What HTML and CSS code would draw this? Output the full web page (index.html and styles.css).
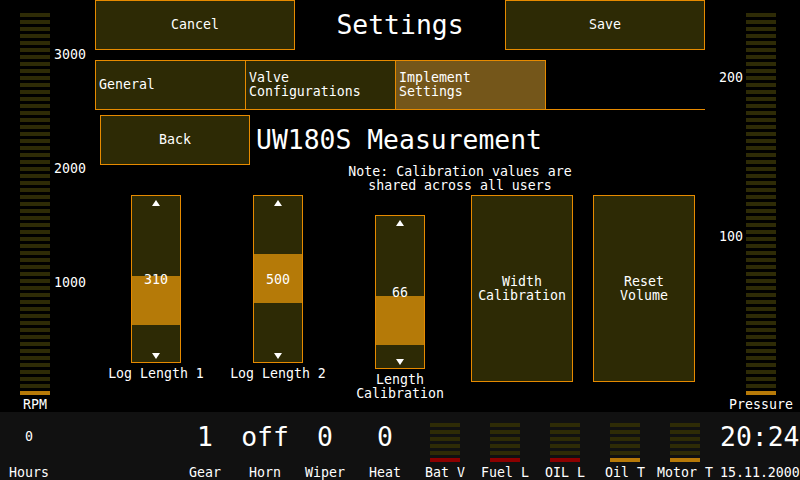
FILE: index.html
```html
<!DOCTYPE html>
<html lang="en">
<head>
    <meta charset="UTF-8">
    <title>Settings</title>
    <link rel="stylesheet" href="styles.css">
</head>
<body>
<div id="screen">
    <div id="main">
        <div class="side side-left">
            <div class="gauge">
                <div class="gauge-stack"></div>
                <div class="gauge-on"></div>
                <span class="gauge-label">RPM</span>
            </div>
            <div class="scale scale-left">
                <span>3000</span>
                <span>2000</span>
                <span>1000</span>
            </div>
        </div>

        <div id="center">
            <div class="top-row">
                <div class="btn btn-top">Cancel</div>
                <div class="page-title">Settings</div>
                <div class="btn btn-top">Save</div>
            </div>

            <div class="tabs">
                <div class="tab">General</div>
                <div class="tab">Valve<br>Configurations</div>
                <div class="tab tab-active">Implement<br>Settings</div>
                <div class="tab-fill"></div>
            </div>

            <div class="sub-head">
                <div class="btn btn-back">Back</div>
                <h1 class="sub-title">UW180S Measurement</h1>
            </div>

            <p class="note">Note: Calibration values are<br>shared across all users</p>

            <div class="controls">
                <div class="cell">
                    <div class="slider">
                        <div class="band" style="top: 80px"></div>
                        <svg class="arrow" width="8" height="6" viewBox="0 0 8 6"><polygon points="4,0 8,6 0,6"/></svg>
                        <span class="value">310</span>
                        <svg class="arrow" width="8" height="6" viewBox="0 0 8 6"><polygon points="0,0 8,0 4,6"/></svg>
                    </div>
                    <div class="cell-label">Log Length 1</div>
                </div>
                <div class="cell">
                    <div class="slider">
                        <div class="band" style="top: 58px"></div>
                        <svg class="arrow" width="8" height="6" viewBox="0 0 8 6"><polygon points="4,0 8,6 0,6"/></svg>
                        <span class="value">500</span>
                        <svg class="arrow" width="8" height="6" viewBox="0 0 8 6"><polygon points="0,0 8,0 4,6"/></svg>
                    </div>
                    <div class="cell-label">Log Length 2</div>
                </div>
                <div class="cell">
                    <div class="slider slider-short">
                        <div class="band" style="top: 80px"></div>
                        <svg class="arrow" width="8" height="6" viewBox="0 0 8 6"><polygon points="4,0 8,6 0,6"/></svg>
                        <span class="value">66</span>
                        <svg class="arrow" width="8" height="6" viewBox="0 0 8 6"><polygon points="0,0 8,0 4,6"/></svg>
                    </div>
                    <div class="cell-label">Length<br>Calibration</div>
                </div>
                <div class="btn btn-big">Width<br>Calibration</div>
                <div class="btn btn-big btn-big-last">Reset<br>Volume</div>
            </div>
        </div>

        <div class="side side-right">
            <div class="scale scale-right">
                <span>200</span>
                <span>100</span>
            </div>
            <div class="gauge">
                <div class="gauge-stack"></div>
                <div class="gauge-on"></div>
                <span class="gauge-label">Pressure</span>
            </div>
        </div>
    </div>

    <div id="status">
        <div class="stat stat-hours">
            <div class="stat-value"><span class="small-val">0</span></div>
            <div class="stat-label">Hours</div>
        </div>
        <div class="stat stat-first">
            <div class="stat-value"><span class="big-val">1</span></div>
            <div class="stat-label">Gear</div>
        </div>
        <div class="stat">
            <div class="stat-value"><span class="big-val">off</span></div>
            <div class="stat-label">Horn</div>
        </div>
        <div class="stat">
            <div class="stat-value"><span class="big-val">0</span></div>
            <div class="stat-label">Wiper</div>
        </div>
        <div class="stat">
            <div class="stat-value"><span class="big-val">0</span></div>
            <div class="stat-label">Heat</div>
        </div>
        <div class="stat">
            <div class="stat-value"><div class="mini"><div class="mini-stack"></div><div class="mini-on red"></div></div></div>
            <div class="stat-label">Bat V</div>
        </div>
        <div class="stat">
            <div class="stat-value"><div class="mini"><div class="mini-stack"></div><div class="mini-on red"></div></div></div>
            <div class="stat-label">Fuel L</div>
        </div>
        <div class="stat">
            <div class="stat-value"><div class="mini"><div class="mini-stack"></div><div class="mini-on red"></div></div></div>
            <div class="stat-label">OIL L</div>
        </div>
        <div class="stat">
            <div class="stat-value"><div class="mini"><div class="mini-stack"></div><div class="mini-on amber"></div></div></div>
            <div class="stat-label">Oil T</div>
        </div>
        <div class="stat">
            <div class="stat-value"><div class="mini"><div class="mini-stack"></div><div class="mini-on amber"></div></div></div>
            <div class="stat-label">Motor T</div>
        </div>
        <div class="clock">
            <div class="stat-value"><span class="big-val">20:24</span></div>
            <div class="stat-label">15.11.2000</div>
        </div>
    </div>
</div>
</body>
</html>
```

FILE: styles.css
```css
*{
    margin: 0;
    padding: 0;
    box-sizing: border-box;
}
body{
    background: #000000;
    color: #ffffff;
    font-family: "DejaVu Sans Mono", "Liberation Mono", monospace;
    font-size: 13.25px;
    line-height: 14px;
    overflow: hidden;
}
#screen{
    width: 800px;
    height: 480px;
    overflow: hidden;
}
#main{
    display: flex;
    height: 412px;
}

/* side gauges */
.side{
    width: 95px;
    display: flex;
    padding-top: 13px;
}
.gauge{
    width: 30px;
    display: flex;
    flex-direction: column;
    align-items: center;
}
.side-left .gauge{
    margin-left: 20px;
}
.gauge-stack{
    width: 30px;
    height: 378px;
    background: repeating-linear-gradient(to bottom, #2e2b06 0, #2e2b06 4px, transparent 4px, transparent 7px);
}
.gauge-on{
    width: 30px;
    height: 4px;
    background: #b77a08;
}
.gauge-label{
    margin-top: 3px;
    white-space: nowrap;
}
.scale{
    display: flex;
    flex-direction: column;
}
.scale-left{
    margin-left: 4px;
    padding-top: 35px;
    gap: 100px;
}
.scale-right{
    width: 38px;
    margin-right: 3px;
    text-align: right;
    padding-top: 58px;
    gap: 145px;
}

/* center panel */
#center{
    width: 610px;
}
.btn{
    background: #2d2a05;
    border: 1px solid #e68a00;
    display: flex;
    align-items: center;
    justify-content: center;
    text-align: center;
}
.top-row{
    display: flex;
    height: 50px;
}
.btn-top{
    width: 200px;
    height: 50px;
}
.page-title{
    flex: 1;
    display: flex;
    align-items: center;
    justify-content: center;
    font-size: 26.4px;
    line-height: 30px;
}
.tabs{
    display: flex;
    height: 50px;
    margin-top: 10px;
}
.tab{
    width: 150px;
    background: #2d2a05;
    border: 1px solid #e68a00;
    border-right: none;
    padding-left: 3px;
    display: flex;
    align-items: center;
}
.tab-active{
    width: 151px;
    background: #74561a;
    border-right: 1px solid #e68a00;
}
.tab-fill{
    flex: 1;
    border-bottom: 1px solid #e68a00;
}
.sub-head{
    display: flex;
    align-items: center;
    margin-top: 5px;
    padding-left: 5px;
}
.btn-back{
    width: 150px;
    height: 50px;
}
.sub-title{
    margin-left: 6px;
    font-size: 26.4px;
    line-height: 30px;
    font-weight: normal;
}
.note{
    padding-left: 120px;
    text-align: center;
}
.controls{
    display: flex;
    align-items: flex-start;
    margin-top: 2px;
}
.cell{
    width: 122px;
    display: flex;
    flex-direction: column;
    align-items: center;
    text-align: center;
}
.slider{
    position: relative;
    width: 50px;
    height: 168px;
    background: #2d2a05;
    border: 1px solid #e68a00;
    display: flex;
    flex-direction: column;
    align-items: center;
    justify-content: space-between;
    padding: 4px 0 3px;
}
.slider-short{
    height: 154px;
    margin-top: 20px;
}
.band{
    position: absolute;
    left: 0;
    right: 0;
    height: 49px;
    background: #b57a08;
}
.arrow{
    position: relative;
    fill: #ffffff;
    display: block;
}
.value{
    position: relative;
}
.cell-label{
    margin-top: 4px;
    white-space: nowrap;
}
.btn-big{
    width: 102px;
    height: 187px;
    margin-left: 10px;
}
.btn-big-last{
    margin-left: 20px;
}

/* bottom status bar */
#status{
    display: flex;
    height: 68px;
    padding-top: 10px;
    background: #111111;
}
.stat{
    width: 60px;
    display: flex;
    flex-direction: column;
    align-items: center;
    white-space: nowrap;
}
.stat-hours{
    width: 58px;
}
.stat-first{
    margin-left: 117px;
}
.stat-value{
    height: 44px;
    display: flex;
    flex-direction: column;
    align-items: center;
}
.big-val{
    font-size: 26.4px;
    line-height: 30px;
}
.small-val{
    line-height: 30px;
}
.mini{
    margin-top: 1px;
    width: 30px;
}
.mini-stack{
    height: 35px;
    background: repeating-linear-gradient(to bottom, #2e2b06 0, #2e2b06 4px, transparent 4px, transparent 7px);
}
.mini-on{
    height: 4px;
}
.mini-on.red{
    background: #8c0000;
}
.mini-on.amber{
    background: #b77a08;
}
.clock{
    margin-left: 5px;
    width: 80px;
    white-space: nowrap;
}
.clock .stat-value{
    align-items: flex-start;
}
```
